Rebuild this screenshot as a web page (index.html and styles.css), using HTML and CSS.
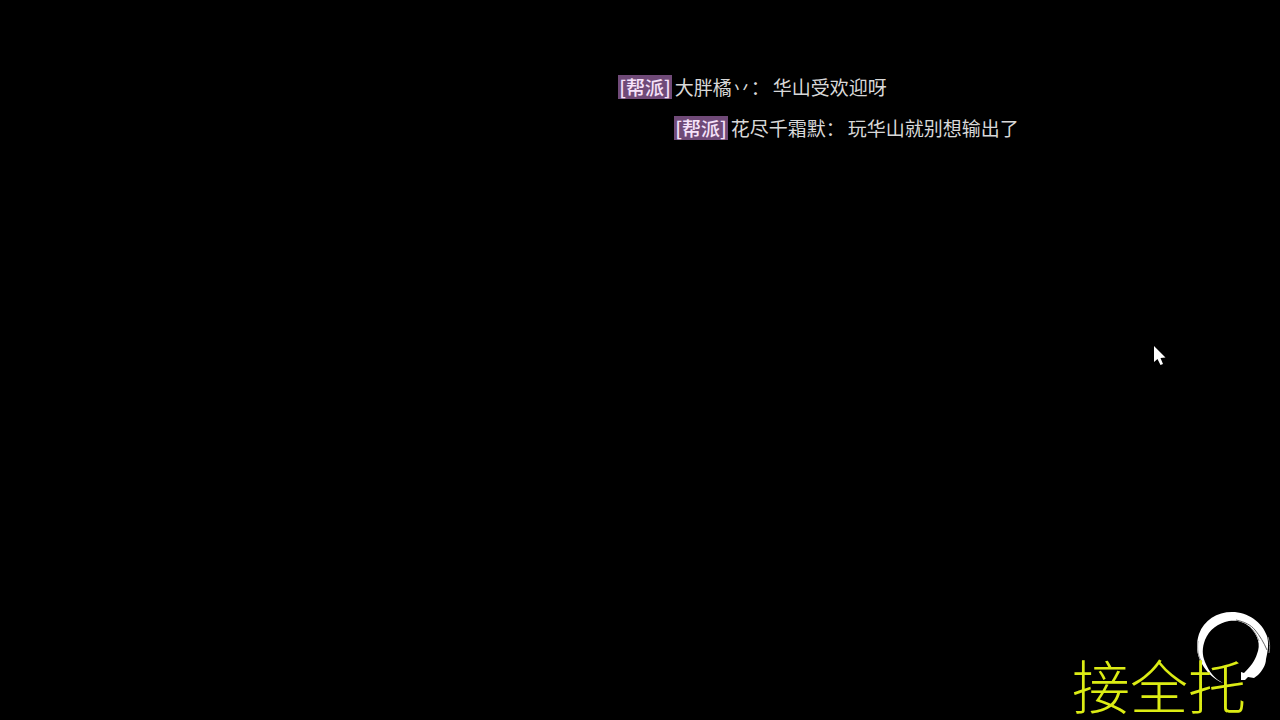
FILE: index.html
```
<!DOCTYPE html>
<html lang="zh-CN">
<head>
    <meta charset="UTF-8">
    <meta name="viewport" content="width=device-width, initial-scale=1.0">
    <title>帮派</title>
    <link rel="stylesheet" href="styles.css">
</head>
<body>
    <!-- Scrolling chat lines -->
    <div class="chat">
        <div class="message">
            <span class="channel">[帮派]</span>
            <span class="sender">大胖橘丷：</span>
            <span class="text">华山受欢迎呀</span>
        </div>
        <div class="message late">
            <span class="channel">[帮派]</span>
            <span class="sender">花尽千霜默：</span>
            <span class="text">玩华山就别想输出了</span>
        </div>
    </div>

    <svg class="cursor" width="14" height="22" viewBox="0 0 14 22" aria-hidden="true">
        <path d="M2 0 V16 L5.5 13 L8.5 19 L11 18 L8.5 12 L13.5 11.5 Z" fill="#fff"/>
    </svg>

    <!-- Brush ring with the caption over it -->
    <div class="corner">
        <svg class="ring" width="90" height="90" viewBox="0 0 90 90" aria-hidden="true">
            <path d="M33 78 C25 75 17 68 12 59 C6 49 6 38 9 29 C14 15 27 7 42 7 C58 7 72 17 77 31 C79 38 78 46 76 54 C76 60 72 66 68 70 L64 73 L58 72 L55 75 L51 75 L51 67 L54 68 C60 62 65 56 67 49 C71 40 68 30 60 22 C53 16 46 15 39 16 C28 18 19 25 15 35 C12 43 12 50 15 57 C19 67 25 74 33 78 Z" fill="#fff"/>
            <path d="M46 15 C55 17 61 20 65 25 C70 31 74 38 77 45" fill="none" stroke="#666" stroke-width="1"/>
            <path d="M61 23 C65 27 67 31 69 36" fill="none" stroke="#999" stroke-width="1"/>
            <path d="M8 36 C7 44 8 52 12 57" fill="none" stroke="#999" stroke-width="1"/>
            <path d="M78 32 C80 38 80 43 79 48" fill="none" stroke="#888" stroke-width="1"/>
        </svg>
        <div class="caption">接全托</div>
    </div>
</body>
</html>
```

FILE: styles.css
```
body {
    margin: 0;
    min-height: 100vh;
    position: relative;
    overflow: hidden;
    background-color: #000;
    color: #d8d8d8;
    font-family: "Noto Sans CJK SC", sans-serif;
}
.chat {
    display: flex;
    flex-direction: column;
    gap: 17px;
    padding-top: 75px;
    padding-left: 48.3%;
}
.message {
    display: flex;
    gap: 3px;
    font-size: 19px;
    line-height: 24px;
    white-space: nowrap;
}
.late {
    margin-left: 56px;
}
.channel {
    padding: 0 1px;
    background-color: #704a78;
    color: #f6e2fa;
    font-weight: 500;
}
.cursor {
    position: absolute;
    top: 48%;
    left: 90%;
}
.corner {
    position: absolute;
    right: 0;
    bottom: 0;
    width: 208px;
    height: 115px;
}
.ring {
    position: absolute;
    top: 0;
    right: 0;
}
.caption {
    position: absolute;
    left: 0;
    bottom: 0;
    color: #dcec14;
    font-family: "Liberation Serif", "Noto Sans CJK SC", serif;
    font-size: 58px;
    font-weight: 300;
    line-height: 60px;
    white-space: nowrap;
}
```
